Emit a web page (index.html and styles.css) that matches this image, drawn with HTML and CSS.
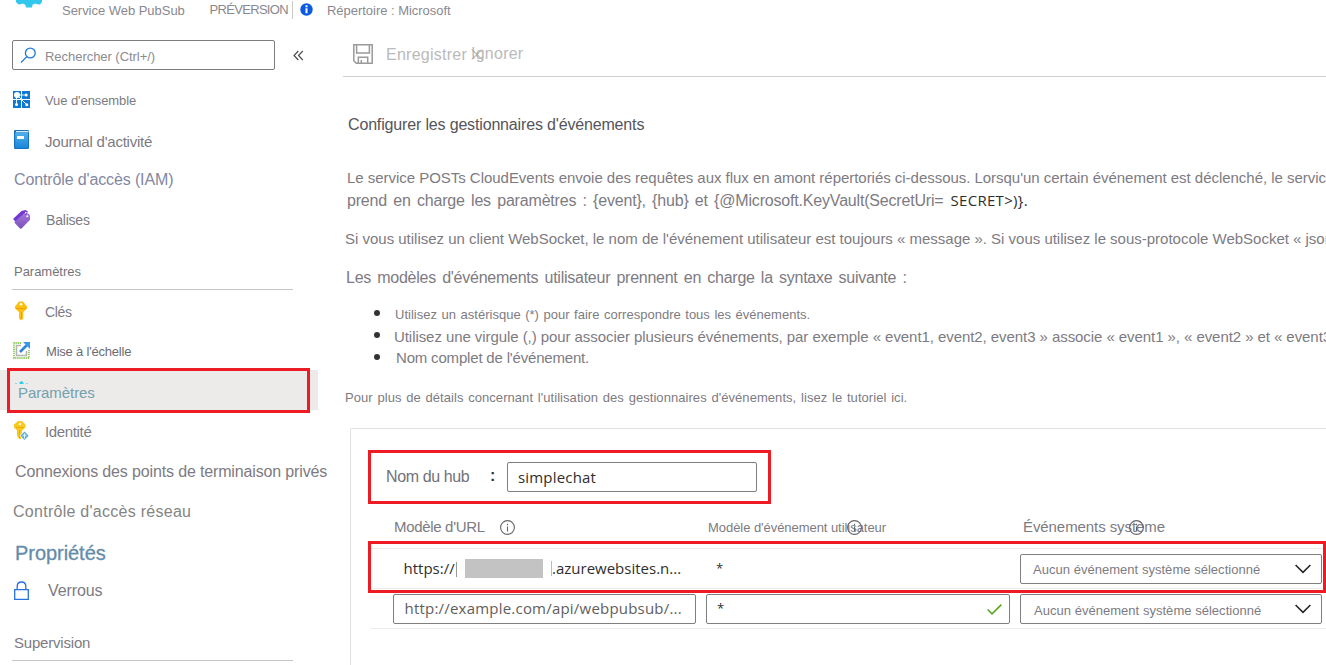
FILE: index.html
```html
<!DOCTYPE html>
<html lang="fr">
<head>
<meta charset="utf-8">
<title>Service Web PubSub - Paramètres</title>
<link rel="stylesheet" href="styles.css">
</head>
<body>
<header class="top">
  <svg class="gear" width="28" height="10" viewBox="0 0 28 10"><path fill="#32c8ee" d="M1 0H27V2L25 4.500 22 4.200 20.500 3.500 17.500 4.700 17 7.600H11L10.300 4.700 7.500 3.500 6 4.200 3.500 4.500 1 2Z"/></svg>
  <span class="service">Service Web PubSub</span>
  <span class="preview">PRÉVERSION</span>
  <span class="divider"></span>
  <svg class="info-dot" width="13" height="13" viewBox="0 0 13 13"><circle cx="6.500" cy="6.500" r="6.200" fill="#0a5be0"/><path fill="#fff" d="M5.500 2.300h2v1.900h-2zM5.500 5.300h2v5h-2z"/></svg>
  <span class="directory">Répertoire : Microsoft</span>
</header>
<div class="shell">
  <nav class="side">
    <div class="search-row">
      <div class="search">
        <svg width="17" height="17" viewBox="0 0 17 17" fill="none" stroke="#1b7bd6" stroke-width="1.300"><circle cx="10.300" cy="6" r="4.900"/><path d="M6.800 9.600 1 15.500"/></svg>
        <span>Rechercher (Ctrl+/)</span>
      </div>
      <svg class="collapse" width="11" height="11" viewBox="0 0 11 11" fill="none" stroke="#444" stroke-width="1.100"><path d="M5.300 1 1 5.500 5.300 10M9.800 1 5.500 5.500 9.800 10"/></svg>
    </div>
    <a class="item overview">
      <svg class="up1" width="20" height="20" viewBox="0 0 20 20"><path fill="#0f78d4" d="M1 1h8v8H1zM10 1h8v8h-8zM1 10h8v8H1zM10 10h8v8h-8z"/><g stroke="#e8f4ff" stroke-width="1"><path d="M5 5h9M4.500 5v9M5 5l10 10"/></g><g fill="#fff"><circle cx="5" cy="5" r="3"/><circle cx="14.200" cy="5" r="1.500"/><circle cx="4.500" cy="14.500" r="1.500"/><circle cx="14.800" cy="14.800" r="1.500"/></g></svg>
      <span>Vue d'ensemble</span></a>
    <a class="item journal">
      <svg class="up2" width="20" height="20" viewBox="0 0 20 20"><defs><linearGradient id="book" x2="0" y2="1"><stop offset="0" stop-color="#4fb0ec"/><stop offset="1" stop-color="#1b86d8"/></linearGradient></defs><rect x="2" y="0" width="15" height="19" rx="1.200" fill="#1673bd"/><path fill="#d5e9f6" d="M4 1h12.500v1.400H4z"/><path fill="url(#book)" d="M3.200 2.600H16V18H3.200z"/><path fill="#fff" d="M5 6h7v3H5z"/></svg>
      <span>Journal d'activité</span></a>
    <a class="item iam"><span>Contrôle d'accès (IAM)</span></a>
    <a class="item tags">
      <svg width="20" height="20" viewBox="0 0 20 20"><defs><linearGradient id="tag" x2="0" y2="1"><stop offset="0" stop-color="#a177d8"/><stop offset="1" stop-color="#7e4fbd"/></linearGradient></defs><path fill="#7338d3" d="M1 9 9.500 1 13.500 0l2.500 1.500L5 13Z"/><path fill="url(#tag)" d="M3 11.500 12.500 3 17 4l1 1.500v4.300L9.300 18.800 8 18.500 2.500 12.800Z"/><circle cx="13.800" cy="2.700" r=".9" fill="#fff"/><circle cx="15.300" cy="6.300" r="1" fill="#fff"/><path d="M13.500 4.500l2-1.500" fill="none" stroke="#6a2fbe"/></svg>
      <span>Balises</span></a>
    <h2 class="group g-settings">Paramètres</h2>
    <a class="item keys">
      <svg class="up1" width="20" height="20" viewBox="0 0 20 20"><path fill="#fdbf11" d="M7 .5h4L15 5.500v2L11.300 11v6.500L9 19.500 7 17.500V11L3 7.500v-2Z"/><circle cx="9" cy="3.200" r="1.300" fill="#fff"/><path stroke="#f0a008" d="M4 7.500h10M9.500 11v7"/></svg>
      <span>Clés</span></a>
    <a class="item scale">
      <svg class="up1" width="20" height="20" viewBox="0 0 20 20" fill="none"><path stroke="#8fcb5c" stroke-width="1.800" stroke-dasharray="1.300 .8" d="M9 2H2V17H17V9"/><path stroke="#b5b5b5" stroke-width="1.600" d="M9 4.500H4.500V14.500H14.500V10"/><path stroke="#2b88d8" stroke-width="2.600" d="M8 11 15 4"/><path fill="#3999e8" d="M11 1h7v7z"/></svg>
      <span>Mise à l'échelle</span></a>
    <a class="item selected">
      <svg class="peek" width="14" height="3" viewBox="0 0 14 3"><path fill="#32c8ee" d="M4.500 3V1.500L6.500 0 8.500 1.500V3z"/><path stroke="#8fd5e8" d="M0 2.500h2M11 2.500h2"/></svg>
      <span>Paramètres</span></a>
    <a class="item identity">
      <svg class="up1" width="20" height="20" viewBox="0 0 20 20"><path fill="#fbc81e" d="M6 0h4l3.500 3.500v3L10 9.500v5L9 18H7l-2-3V9.500L2 6.500v-3Z"/><circle cx="8" cy="3" r="1.200" fill="#fff"/><path stroke="#e9ab10" d="M4 6.500h8M7.500 9v8"/><path fill="#fff" d="m12.500 9.500 5 5-5 5-5-5z"/><path fill="#5eb0d4" d="m12.500 10.500 4.200 4.200-4.200 4.200-4.200-4.200z"/><path stroke="#e6f6fb" stroke-width="1" d="M12.500 12.500v5M10.500 15l2-1.500 2 1.500" fill="none"/></svg>
      <span>Identité</span></a>
    <a class="item endpoints"><span>Connexions des points de terminaison privés</span></a>
    <a class="item network"><span>Contrôle d'accès réseau</span></a>
    <a class="item props"><span>Propriétés</span></a>
    <a class="item locks">
      <svg width="20" height="20" viewBox="0 0 20 20" fill="none" stroke="#2672e0"><path stroke-width="1.300" d="M2.700 8.700h13.600v9.700H2.700z"/><path stroke-width="1.300" d="M5.200 8.500V5.300q0-4.300 4.300-4.300t4.300 4.300v3.200"/></svg>
      <span>Verrous</span></a>
    <h2 class="group g-monitor">Supervision</h2>
    <div class="mark mark-selected"></div>
  </nav>
  <main class="main">
    <div class="toolbar">
      <svg width="20" height="20" viewBox="0 0 20 20" fill="none" stroke="#9a9a9a" stroke-width="1.500"><path d="M.8 .8H19.200V19.200H3.300L.8 16.800Z"/><path d="M3.600 1v8h12.800V1M5.300 19v-5.800h9.400V19M8.300 19v-3"/></svg>
      <span class="save">Enregistrer</span>
      <span class="discard">Ignorer<svg width="12" height="11" viewBox="0 0 12 11" stroke="#999" fill="none"><path d="M1 .5 11 10.500M11 .5 1 10.500"/></svg></span>
    </div>
    <h1 class="title">Configurer les gestionnaires d'événements</h1>
    <p class="p1">Le service POSTs CloudEvents envoie des requêtes aux flux en amont répertoriés ci-dessous. Lorsqu'un certain événement est déclenché, le servic</p>
    <p class="p2"><span>prend en charge les paramètres : {event}, {hub} et {@Microsoft.KeyVault(SecretUri=</span><b>SECRET&gt;)}.</b></p>
    <p class="p3">Si vous utilisez un client WebSocket, le nom de l'événement utilisateur est toujours « message ». Si vous utilisez le sous-protocole WebSocket « json</p>
    <p class="p4">Les modèles d'événements utilisateur prennent en charge la syntaxe suivante :</p>
    <ul class="rules">
      <li class="r1">Utilisez un astérisque (*) pour faire correspondre tous les événements.</li>
      <li class="r2">Utilisez une virgule (,) pour associer plusieurs événements, par exemple « event1, event2, event3 » associe « event1 », « event2 » et « event3</li>
      <li class="r3">Nom complet de l'événement.</li>
    </ul>
    <p class="p5">Pour plus de détails concernant l'utilisation des gestionnaires d'événements, lisez le tutoriel ici.</p>
    <section class="panel">
      <div class="hub">
        <label>Nom du hub</label><i class="colon">:</i>
        <div class="field ui">simplechat</div>
      </div>
      <div class="grid head">
        <div class="h-url">Modèle d'URL<svg class="info" width="15" height="15" viewBox="0 0 15 15"><circle cx="7.500" cy="7.500" r="6.900"/><path d="M7.500 6.500v5M7.500 3.800v1.400"/></svg></div>
        <div class="h-user">Modèle d'événement utilisateur<svg class="info" width="15" height="15" viewBox="0 0 15 15"><circle cx="7.500" cy="7.500" r="6.900"/><path d="M7.500 6.500v5M7.500 3.800v1.400"/></svg></div>
        <div class="h-sys">Événements système<svg class="info" width="15" height="15" viewBox="0 0 15 15"><circle cx="7.500" cy="7.500" r="6.900"/><path d="M7.500 6.500v5M7.500 3.800v1.400"/></svg></div>
      </div>
      <div class="grid row">
        <div class="url ui"><span class="scheme">https://</span><i class="edge"></i><i class="redact"></i><i class="edge edge2"></i><span class="host">.azurewebsites.n...</span></div>
        <div class="plain ui">*</div>
        <div class="field select"><span>Aucun événement système sélectionné</span><svg width="16" height="10" viewBox="0 0 16 10" fill="none" stroke="#222" stroke-width="1.500"><path d="M.6 1 8 8.400 15.400 1"/></svg></div>
      </div>
      <div class="grid row row2">
        <div class="field ui hint">http://example.com/api/webpubsub/...</div>
        <div class="field ui star">*<svg width="15" height="11" viewBox="0 0 15 11" fill="none" stroke="#57a820" stroke-width="1.500"><path d="M.6 5.500 5 9.900 14.400 .6"/></svg></div>
        <div class="field select second"><span>Aucun événement système sélectionné</span><svg width="16" height="10" viewBox="0 0 16 10" fill="none" stroke="#222" stroke-width="1.500"><path d="M.6 1 8 8.400 15.400 1"/></svg></div>
      </div>
      <div class="mark mark-hub"></div>
      <div class="mark mark-row"></div>
    </section>
  </main>
</div>
</body>
</html>
```
FILE: styles.css
```css
* { box-sizing: border-box; }
html, body { margin: 0; height: 665px; overflow: hidden; background: #fff; }
body {
  font: 15px/20px "Liberation Sans", sans-serif;
  color: #7d7b82;
  white-space: nowrap;
}
h1, h2, p, ul { margin: 0; padding: 0; font-weight: normal; font-size: inherit; }
svg { display: block; flex: none; }
i, b { font-style: normal; font-weight: normal; }
.ui { font-family: "Open Sans", sans-serif; color: #2f2e2d; }

/* top strip */
.top { display: flex; height: 20px; font-size: 13px; color: #8a888f; }
.gear { margin-left: 15px; }
.service { margin: 1px 0 0 19px; width: 147.500px; letter-spacing: -.03px; }
.preview { width: 82.500px; letter-spacing: -.68px; }
.divider { width: 1px; height: 18px; margin-top: 1px; background: #c9c9c9; }
.info-dot { margin: 3px 0 0 7px; }
.directory { margin: 1px 0 0 14px; letter-spacing: -.03px; }

.shell { display: flex; height: 645px; }

/* side menu */
.side { position: relative; width: 318px; flex: none; display: flex; flex-direction: column; }
.search-row { display: flex; align-items: center; margin: 20px 0 21px 12px; height: 30px; flex: none; }
.search {
  width: 263px; height: 30px; border: 1px solid #7d7d7d; border-radius: 2px;
  display: flex; padding: 6px 0 0 7px; font-size: 13px; color: #8c8b91;
}
.search span { margin: 0 0 0 8px; letter-spacing: -.04px; }
.collapse { margin: 1px 0 0 18px; }
.item { display: flex; height: 20px; flex: none; padding-left: 12px; margin-bottom: 20px; }
.item span { margin-left: 13px; }
.up1 { margin-top: -1px; }
.up2 { margin-top: -2px; }
.overview { font-size: 13px; margin-bottom: 21px; letter-spacing: -.08px; }
.journal { margin-bottom: 18px; letter-spacing: -.23px; }
.iam { font-size: 16px; letter-spacing: -.13px; color: #8388a0; }
.iam span { margin-left: 2px; }
.tags { font-size: 14px; letter-spacing: -.2px; margin-bottom: 32px; }
.tags span { margin-left: 14px; }
.group { height: 28px; border-bottom: 1px solid #c6c6c6; margin: 0 25px 12px 12px; padding-left: 2px; flex: none; }
.g-settings { font-size: 13px; color: #757378; letter-spacing: -.03px; }
.keys { font-size: 14px; letter-spacing: -.35px; }
.scale { font-size: 13px; letter-spacing: -.2px; margin-bottom: 8px; color: #6d6b71; }
.scale span { margin-left: 14px; }
.selected { position: relative; height: 40px; padding: 13px 0 0 18px; margin-bottom: 12px; background: #ecebea; color: #74a0ad; }
.selected span { margin-left: 0; letter-spacing: -.08px; }
.peek { position: absolute; left: 15px; top: 11px; }
.identity { letter-spacing: -.35px; }
.endpoints { font-size: 16px; letter-spacing: -.145px; }
.endpoints span { margin-left: 3px; }
.network { font-size: 16px; letter-spacing: .27px; margin-bottom: 21px; color: #848583; }
.network span { margin-left: 1px; }
.props { font-size: 20px; margin-bottom: 18px; color: #648cab; -webkit-text-stroke: .3px #648cab; }
.props span { margin-left: 3px; letter-spacing: -.05px; }
.locks { font-size: 16px; margin-bottom: 32px; }
.locks span { margin-left: 16px; letter-spacing: -.1px; }
.g-monitor { letter-spacing: -.2px; }

/* red highlight frames */
.mark { position: absolute; border: 3px solid #ed1c24; pointer-events: none; }
.mark-selected { left: 7px; top: 348px; width: 303px; height: 45px; }
.mark-hub { left: 17px; top: 21px; width: 403px; height: 54px; }
.mark-row { left: 17px; top: 112px; width: 958px; height: 52px; }

/* content */
.main { flex: 1; min-width: 0; margin-left: 25px; overflow: hidden; }
.toolbar {
  display: flex; height: 57px; border-bottom: 1px solid #cfcfcf; padding: 24px 0 0 10px;
  font-size: 16px; letter-spacing: .25px; color: #bababa;
}
.save { margin: 1px 0 0 13px; width: 85px; }
.discard { position: relative; }
.discard svg { position: absolute; left: 0; top: 5px; }
.title { font-size: 16px; letter-spacing: -.16px; margin: 38px 0 33px 5px; color: #55555a; }
.p1 { margin-left: 4px; letter-spacing: -.031px; }
.p2 { margin: 3px 0 18px 4px; height: 20px; display: flex; font-size: 16px; letter-spacing: -.184px; word-spacing: 2px; }
.p2 b { font: 15px/20px "Open Sans", sans-serif; letter-spacing: .3px; color: #2f2e2d; margin: -1px 0 0 7px; }
.p3 { margin-left: 2px; letter-spacing: -.01px; }
.p4 { margin: 19px 0 17px 3px; font-size: 16px; letter-spacing: -.25px; word-spacing: 2px; }
.rules { list-style: none; }
.rules li { position: relative; height: 20px; }
.rules li::before { content: ""; position: absolute; left: 31px; width: 6px; height: 6px; border-radius: 50%; background: #333; }
.rules .r1 { padding-left: 52px; font-size: 13px; letter-spacing: .014px; word-spacing: .9px; }
.rules .r1::before { top: 5px; }
.rules .r2 { padding-left: 51px; margin-top: 2px; letter-spacing: -.066px; }
.rules .r2::before { top: 5px; }
.rules .r3 { padding-left: 53px; margin-top: 1px; letter-spacing: -.18px; }
.rules .r3::before { top: 6px; }
.p5 { margin: 20px 0 20px 2px; font-size: 13px; letter-spacing: .056px; word-spacing: 1.050px; }

/* hub panel */
.panel {
  position: relative; height: 260px; margin-left: 7px;
  border: 1px solid #e1e1e1; border-width: 1px 0 0 1px; border-radius: 2px 0 0 0;
}
.hub { display: flex; margin: 33px 0 0 35px; height: 30px; font-size: 16px; letter-spacing: -.4px; color: #727177; }
.hub label { width: 103px; padding-top: 5px; }
.colon { width: 18px; padding: 4px 0 0 1px; font-weight: bold; color: #333; }
.field { height: 30px; border: 1px solid #7f7f7f; border-radius: 2px; font-size: 15px; line-height: 28px; }
.hub .field { width: 250px; padding-left: 10px; letter-spacing: .18px; }
.grid { display: grid; grid-template-columns: 303px 304px 302px; column-gap: 10px; margin-left: 20px; padding-left: 22px; }
.head { height: 31px; margin-top: 25px; }
.head div { position: relative; }
.h-url { padding-left: 1px; letter-spacing: -.32px; }
.h-user { padding: 1px 0 0 2px; font-size: 13px; letter-spacing: -.05px; }
.h-sys { padding-left: 3px; letter-spacing: -.08px; }
.info { position: absolute; top: 3px; fill: none; stroke: #66646a; stroke-width: 1.1; }
.h-url .info { left: 107px; }
.h-user .info { left: 141px; }
.h-sys .info { left: 109px; }
.row { height: 41px; padding-top: 5px; border-top: 1px solid #ebebe9; }
.row2 { margin-top: -1px; border-bottom: 1px solid #ebebe9; }
.url { position: relative; display: flex; padding: 4px 0 0 10.500px; }
.scheme { width: 52.500px; }
.edge { width: 1px; height: 15px; margin-top: 4px; background: #999; }
.redact { width: 78px; height: 19px; margin: 1px 8px 0 8px; background: #c3c3c3; }
.edge2 { background: #bbb; margin-top: 3px; }
.host { letter-spacing: 0; }
.plain { padding: 4px 0 0 10px; font-size: 13px; }
.select { display: flex; justify-content: space-between; align-items: center; padding: 0 10px 0 12px; font-size: 13px; }
.select span { padding-top: 2px; letter-spacing: .03px; }
.select.second { padding-left: 13px; }
.select.second span { padding-top: 4px; }
.hint { padding-left: 10.500px; color: #5f5e5c; letter-spacing: .21px; line-height: 27px; }
.star { position: relative; padding-left: 10px; font-size: 13px; line-height: 27px; }
.star svg { position: absolute; right: 7px; top: 9px; }
```
